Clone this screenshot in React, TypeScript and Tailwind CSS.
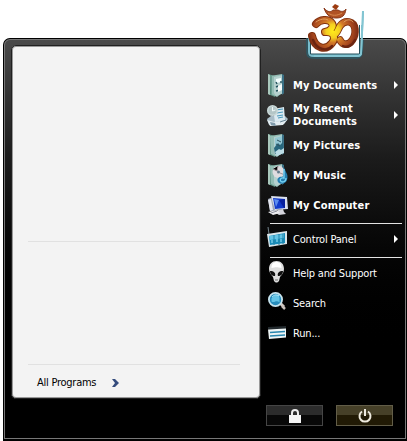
import type { ReactNode } from "react";

function Folder({ children }: { children?: ReactNode }) {
  return (
    <svg width="24" height="26" viewBox="0 0 24 26">
      <path d="M1 2l7 2v21l-7-3z" fill="#5f9384" />
      <path d="M1 2l2 1v20l-2-1z" fill="#a9c8bc" />
      <path d="M3 4l12-2v19l-5 4-6-3z" fill="#94bdb4" />
      <path d="M7 5l9-2 1 18-8 3-2-3z" fill="#b5d0ce" />
      <path d="M15 2l2 1v18l-2 2z" fill="#3a7085" />
      {children}
    </svg>
  );
}

function DocumentsIcon() {
  return (
    <Folder>
      <path d="M9 7l5-1v4l-5 1z" fill="#f5ffff" />
      <path d="M9 10l1 2m4-3v2m-5 4l2-1m-2 5l4-1" stroke="#24535e" strokeWidth="1.4" />
      <path d="M11 14l4-2v6l-4 2z" fill="#f7faf8" />
      <path d="M4 4v18" stroke="#427e6e" />
    </Folder>
  );
}

function PicturesIcon() {
  return (
    <Folder>
      <path d="M8 6l7-2v9l-7 1z" fill="#93c7d3" />
      <path d="M7 16l4-5 2 2 3-3v9l-8 3z" fill="#28677d" />
      <path d="M8 20l4-3 2 1 3-2v5l-7 3z" fill="#bbdce4" />
      <path d="M10 8l4 2m-5 2l4 2" stroke="#315460" />
    </Folder>
  );
}

function MusicIcon() {
  return (
    <Folder>
      <circle cx="11.5" cy="10" r="6" fill="#dfdce0" />
      <path d="M6 7l4 2 1-5M13 11l5 2" stroke="#9d9298" />
      <circle cx="11.5" cy="10" r="1.5" fill="#647c8c" />
      <path d="M17 5c1 5 5 7 3 13-1 4-7 5-9 2-2-4 2-6 5-5z" fill="#257eb0" />
      <path d="M17 7v9c-4-1-5 3-2 4 3 0 4-2 4-4" fill="none" stroke="#7bd5f5" strokeWidth="1.3" />
    </Folder>
  );
}

function RecentIcon() {
  return (
    <svg width="24" height="26" viewBox="0 0 24 26">
      <path d="M0 17l4-3h14l3 3-4 5-15 1z" fill="#a9bdc8" />
      <path d="M0 18l7 2 13-2-4 5-13 1z" fill="#e4edf1" />
      <path d="M6 7l11-2 1 13-10 2z" fill="#dceaf1" />
      <path d="M9 8l7-1m-6 4l6-1m-6 4l6-1m-5 3l5-1" stroke="#4a9abc" strokeWidth="1.2" />
      <circle cx="5.5" cy="8.5" r="5.5" fill="#c9d8d8" />
      <circle cx="5.5" cy="8.5" r="4" fill="#b4c6c7" />
      <path d="M5.5 5v4l3-1" fill="none" stroke="#eef8f8" />
      <path d="M3 20l5 1 1 3-5-1z" fill="#809bab" />
      <path d="M13 20l6-2" stroke="#6a8697" />
    </svg>
  );
}

function ComputerIcon() {
  return (
    <svg width="24" height="26" viewBox="0 0 24 26">
      <path d="M1 7l5-2 3 15-6-1z" fill="#9ca5b6" />
      <path d="M1 8l3-1 2 11-3 1z" fill="#e4e6ee" />
      <path d="M4 4l16 1 1 12-13 1z" fill="#dbe1ee" />
      <path d="M6 6l12 1v9l-10 1z" fill="#1239c9" />
      <path d="M7 7l5 1-3 7z" fill="#5d8cef" />
      <path d="M12 8l5 8h1V7z" fill="#09209c" />
      <path d="M11 18l5-1 1 3 2 2-7 1-3-2z" fill="#d4d5dc" />
      <path d="M1 20l9-2 3 3-7 2z" fill="#eeeef1" />
      <path d="M4 21l6-2" stroke="#8b8e9c" />
    </svg>
  );
}

function ControlIcon() {
  return (
    <svg width="24" height="26" viewBox="0 0 24 26">
      <path d="M1 1l1 7" stroke="#75858d" />
      <path d="M0 8l20-3v13L2 21z" fill="#d9e5e9" />
      <path d="M2 10l16-3v10L3 19z" fill="#188dbc" />
      <path d="M2 10l15-2v4L3 14z" fill="#64c4e4" />
      <path d="M7 9v10m5-11v11m4-11v10" stroke="#2384a6" />
      <path d="M5 14v3m5-4v3m4-3v3" stroke="#a2e9fa" />
    </svg>
  );
}

function AlienIcon() {
  return (
    <svg width="24" height="26" viewBox="0 0 24 26">
      <path d="M9.500 1C5 1 2 4 2 9c0 3 2 6 4 8l1 4c2 2 3 2 5 0l1-4c2-2 4-5 4-8 0-5-3-8-7.500-8z" fill="#dedede" />
      <path d="M9.500 2c-3 0-5 2-5 6 4-1 6-1 10 0 0-4-2-6-5-6z" fill="white" />
      <path d="M3 11c4 0 6 2 5 5-3 0-5-2-5-5zm13 0c-4 0-6 2-5 5 3 0 5-2 5-5z" fill="#101010" />
      <path d="M8 20h3" stroke="#727272" />
    </svg>
  );
}

function SearchIcon() {
  return (
    <svg width="24" height="26" viewBox="0 0 24 26">
      <path d="M13 13l4 4" stroke="#d3cac3" strokeWidth="3" />
      <path d="M15 16l3 3" stroke="#c8c0ba" strokeWidth="2.5" />
      <circle cx="8.500" cy="9.500" r="6.600" fill="#278dbd" stroke="#c7e3ed" strokeWidth="1.800" />
      <path d="M4.500 8.500c2-4 7-5 8-1v5c-4-3-5 1-8-1z" fill="#64c5e7" />
      <path d="M5 7c2-2 4-3 7-1" stroke="#baf3ff" fill="none" />
    </svg>
  );
}

function RunIcon() {
  return (
    <svg width="24" height="26" viewBox="0 0 24 26">
      <path d="M1 7l18-1v3H1z" fill="#22292d" />
      <path d="M1 9.500l18-1v9L2 19z" fill="#edf4f5" />
      <path d="M3 12.500l15-1M3 16l15-1" stroke="#2785ad" strokeWidth="1.500" />
    </svg>
  );
}

function Arrow() {
  return (
    <svg className="shrink-0" width="4" height="8" viewBox="0 0 4 8">
      <path d="M0 0l4 4-4 4z" fill="white" />
    </svg>
  );
}

function MenuRow({ icon, label, bold, arrow }: { icon: ReactNode; label: ReactNode; bold?: boolean; arrow?: boolean }) {
  return (
    <div className="flex h-[30px] items-center pl-[6px] pr-[5px]">
      <span className="w-[26px] shrink-0">{icon}</span>
      <span className={bold ? "flex-1 whitespace-nowrap text-[11px] font-bold leading-[13px] tracking-[0.17px]" : "flex-1 whitespace-nowrap text-[11px] leading-[13px] tracking-[-0.18px]"}>
        {label}
      </span>
      {arrow && <Arrow />}
    </div>
  );
}

function UserPicture() {
  return (
    <svg className="absolute left-[305px] top-0" width="62" height="62" viewBox="0 0 62 62">
      <defs>
        <radialGradient id="copper" gradientUnits="userSpaceOnUse" cx="28" cy="31" r="26">
          <stop stopColor="#ffed1a" />
          <stop offset=".26" stopColor="#f5cf20" />
          <stop offset=".45" stopColor="#d27828" />
          <stop offset=".75" stopColor="#a8481e" />
          <stop offset="1" stopColor="#762611" />
        </radialGradient>
      </defs>
      <path d="M2 38v14q0 6 6 6h43q6 0 6-6l1-12" fill="none" stroke="#2c5a66" strokeWidth="1.5" />
      <path d="M3 38h3v15q0 1 2 1h46q2 0 2-2V25h1l1-14h1l-2 42q0 4-5 4H8q-5 0-5-5z" fill="#78bccb" />
      <path d="M6 7h48v47H6z" fill="white" />
      <path d="M5.5 37v17H54.5V25" fill="none" stroke="#234e5a" />
      <path d="M58 11l-2 42q0 3-4 3H9" fill="none" stroke="#83c5d2" strokeWidth="2" />
      <g fill="none" strokeLinecap="round" strokeLinejoin="round">
        <path d="M11 24c4-5 12-5 15-2 4 4 0 9-6 10 9-1 11 6 7 11-6 8-17 6-20-7" stroke="#81310f" strokeWidth="8" />
        <path d="M27 33c5 3 5-2 8-7 5-7 14-5 15 3 1 9-5 16-10 15-3 0-4-2-5-4" stroke="#81310f" strokeWidth="7.500" />
        <path d="M11 24c4-5 12-5 15-2 4 4 0 9-6 10 9-1 11 6 7 11-6 8-17 6-20-7" stroke="url(#copper)" strokeWidth="6" />
        <path d="M27 33c5 3 5-2 8-7 5-7 14-5 15 3 1 9-5 16-10 15-3 0-4-2-5-4" stroke="url(#copper)" strokeWidth="5.700" />
        <path d="M8 40c4 10 14 12 19 6M50 40c-3 6-8 8-12 6" stroke="#6b2410" strokeWidth="2.500" />
        <path d="M11 22c4-3 9-4 12-2M39 22c3-3 7-3 9 0" stroke="#dfa061" />
      </g>
      <path d="M19 8c4 5 7 4 9 2h5c3 2 6 2 8-1-1 7-4 9-10 9-7 0-10-4-12-10z" fill="#b05224" stroke="#88381a" />
      <path d="M23 13c4 3 9 3 14 0" fill="none" stroke="#d98a50" />
      <path d="M30 4l4 2-3 4-4-3z" fill="#9c3b10" />
    </svg>
  );
}

export default function App() {
  return (
    <main className="relative h-[441px] w-[407px] overflow-hidden bg-white pl-[3px] pt-[38px] font-['DejaVu_Sans_Condensed','DejaVu_Sans',sans-serif] text-white">
      <section className="h-[403px] w-[404px] rounded-t-[7px] border border-b-2 border-black bg-[#777] p-px">
        <div className="flex h-full rounded-t-[5px] bg-linear-to-b from-[#4a4a4a] via-[#1b1b1b] via-30% to-black to-80% pl-1.5 pt-[5px]">
          <div className="flex h-[354px] w-[250px] shrink-0 flex-col rounded-[5px] border border-[#202020] bg-[#f3f3f3] pl-4 pr-5 text-black ring-1 ring-inset ring-[#999]">
            <div className="h-[196px] shrink-0 border-b border-[#e1e1e1]" />
            <div className="h-[123px] shrink-0 border-b border-[#e1e1e1]" />
            <div className="flex h-8 items-center pl-[9px] pt-[3px]">
              <span className="w-[75px] whitespace-nowrap text-[11px] leading-[13px] tracking-[-0.25px]">All Programs</span>
              <svg width="7" height="8" viewBox="0 0 7 8">
                <path d="M0 0h3l4 4-4 4H0l3-4z" fill="#344b7c" />
              </svg>
            </div>
          </div>
          <nav className="flex w-[142px] shrink-0 flex-col pt-[25px]">
            <MenuRow icon={<DocumentsIcon />} label="My Documents" bold arrow />
            <MenuRow icon={<RecentIcon />} label={<>My Recent<br />Documents</>} bold arrow />
            <MenuRow icon={<PicturesIcon />} label="My Pictures" bold />
            <MenuRow icon={<MusicIcon />} label="My Music" bold />
            <MenuRow icon={<ComputerIcon />} label="My Computer" bold />
            <div className="ml-[9px] mt-[3px] h-px w-[132px] bg-[#e4e4e4]" />
            <MenuRow icon={<ControlIcon />} label="Control Panel" arrow />
            <div className="ml-[9px] mt-[3px] h-px w-[132px] bg-[#e4e4e4]" />
            <MenuRow icon={<AlienIcon />} label="Help and Support" />
            <MenuRow icon={<SearchIcon />} label="Search" />
            <MenuRow icon={<RunIcon />} label="Run..." />
            <div className="ml-[5px] mt-[57px] flex gap-[13px]">
              <div className="flex h-[21px] w-[57px] shrink-0 items-center justify-center border border-[#454545] bg-linear-to-b from-[#2c2c2c] from-45% to-[#080808] to-50%">
                <svg width="12" height="14" viewBox="0 0 12 14">
                  <path d="M3 7V4a3 3 0 016 0v3" fill="none" stroke="#eee" strokeWidth="2" />
                  <path d="M0 6h12v8H0z" fill="#f5f5f5" />
                </svg>
              </div>
              <div className="flex h-[21px] w-[57px] shrink-0 items-center justify-center border border-[#625d48] bg-linear-to-b from-[#464028] from-45% to-[#211a05] to-50%">
                <svg width="14" height="14" viewBox="0 0 14 14">
                  <path d="M4 2.5a5.5 5.5 0 106 0M7 0v7" fill="none" stroke="#eeeade" strokeWidth="2" />
                </svg>
              </div>
            </div>
          </nav>
        </div>
      </section>
      <UserPicture />
    </main>
  );
}
